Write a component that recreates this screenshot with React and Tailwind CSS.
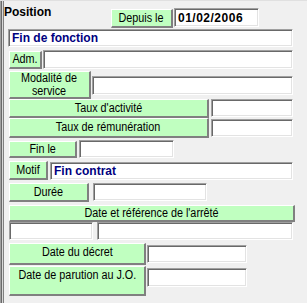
import React from "react";

const btn =
  "flex items-center justify-center bg-[#c0ffc0] border-t border-l border-t-white border-l-white border-r-2 border-b-2 border-r-[#808080] border-b-[#808080] text-[12px] leading-[13px] text-black text-center whitespace-nowrap";
const inp =
  "bg-white border border-t-[#a0a0a0] border-l-[#a0a0a0] border-b-white border-r-white shadow-[inset_1px_1px_0_#696969,inset_-1px_-1px_0_#e3e3e3] flex items-center overflow-hidden";

function L({ children }) {
  return <span className="inline-block scale-x-[0.9] origin-center">{children}</span>;
}

export default function App() {
  return (
    <div className="w-[307px] h-[303px] bg-[#f0f0f0] flex overflow-hidden border-t border-t-[#e0e0e0] font-['Liberation_Sans',Arial,sans-serif]">
      <div className="flex h-full shrink-0">
        <div className="w-px h-full bg-[#a0a0a0]" />
        <div className="w-px h-full bg-[#696969]" />
        <div className="w-px h-full bg-[#d8d8d8]" />
        <div className="w-px h-full bg-[#808080]" />
      </div>
      <div className="flex flex-col">
        {/* header */}
        <div className="flex h-[28px] items-start">
          <div className="w-[107px] pt-[4px] text-[12px] leading-[14px] font-bold text-black">Position</div>
          <div className={`${btn} mt-[8px] w-[62px] h-[19px]`}><L>Depuis le</L></div>
          <div className={`${inp} mt-[7px] ml-px w-[85px] h-[19px] pl-[3px] text-[12px] font-bold tracking-[0.5px] text-black`}>
            01/02/2006
          </div>
        </div>
        {/* Fin de fonction */}
        <div className={`${inp} ml-[4px] w-[285px] h-[18px] pl-[3px] text-[12px] font-bold text-[#000080]`}>
          Fin de fonction
        </div>
        {/* Adm */}
        <div className="flex items-center mt-[3px] h-[19px]">
          <div className={`${btn} ml-[5px] w-[33px] h-[18px]`}><L>Adm.</L></div>
          <div className={`${inp} ml-px w-[250px] h-[19px]`} />
        </div>
        {/* Modalité */}
        <div className="flex items-center mt-[2px] h-[28px]">
          <div className={`${btn} ml-[5px] w-[82px] h-[28px]`}>
            <L>
              Modalité de
              <br />
              service
            </L>
          </div>
          <div className={`${inp} ml-px w-[201px] h-[19px]`} />
        </div>
        {/* Taux d'activité */}
        <div className="flex items-start h-[19px]">
          <div className={`${btn} ml-[5px] w-[200px] h-[19px]`}><L>Taux d'activité</L></div>
          <div className={`${inp} ml-[2px] w-[82px] h-[18px]`} />
        </div>
        {/* Taux de rémunération */}
        <div className="flex items-start h-[20px]">
          <div className={`${btn} ml-[5px] w-[200px] h-[20px]`}><L>Taux de rémunération</L></div>
          <div className={`${inp} ml-[2px] mt-px w-[82px] h-[18px]`} />
        </div>
        {/* Fin le */}
        <div className="flex items-start mt-[2px] h-[18px]">
          <div className={`${btn} ml-[5px] mt-px w-[68px] h-[17px]`}><L>Fin le</L></div>
          <div className={`${inp} ml-[2px] w-[95px] h-[18px]`} />
        </div>
        {/* Motif */}
        <div className="flex items-start mt-[3px] h-[19px]">
          <div className={`${btn} ml-[5px] w-[39px] h-[19px]`}><L>Motif</L></div>
          <div className={`${inp} ml-[2px] mt-px w-[243px] h-[18px] pl-[3px] text-[12px] font-bold text-[#000080]`}>
            Fin contrat
          </div>
        </div>
        {/* Durée */}
        <div className="flex items-start mt-[3px] h-[19px]">
          <div className={`${btn} ml-[5px] w-[80px] h-[19px]`}><L>Durée</L></div>
          <div className={`${inp} ml-[4px] w-[114px] h-[18px]`} />
        </div>
        {/* Date et référence */}
        <div className={`${btn} ml-[5px] mt-[3px] w-[286px] h-[17px]`}><L>Date et référence de l'arrêté</L></div>
        <div className="flex items-start h-[18px]">
          <div className={`${inp} ml-[5px] w-[84px] h-[18px]`} />
          <div className={`${inp} ml-[4px] w-[196px] h-[18px]`} />
        </div>
        {/* Date du décret */}
        <div className="flex items-start mt-[3px] h-[22px]">
          <div className={`${btn} ml-[5px] w-[137px] h-[22px] pb-[3px]`}><L>Date du décret</L></div>
          <div className={`${inp} ml-px mt-[2px] w-[100px] h-[18px]`} />
        </div>
        {/* Date de parution */}
        <div className="flex items-start mt-px h-[30px]">
          <div className={`${btn} ml-[5px] w-[137px] h-[30px] !items-start pt-[2px]`}><L>Date de parution au J.O.</L></div>
          <div className={`${inp} ml-px mt-[2px] w-[100px] h-[19px]`} />
        </div>
      </div>
    </div>
  );
}
